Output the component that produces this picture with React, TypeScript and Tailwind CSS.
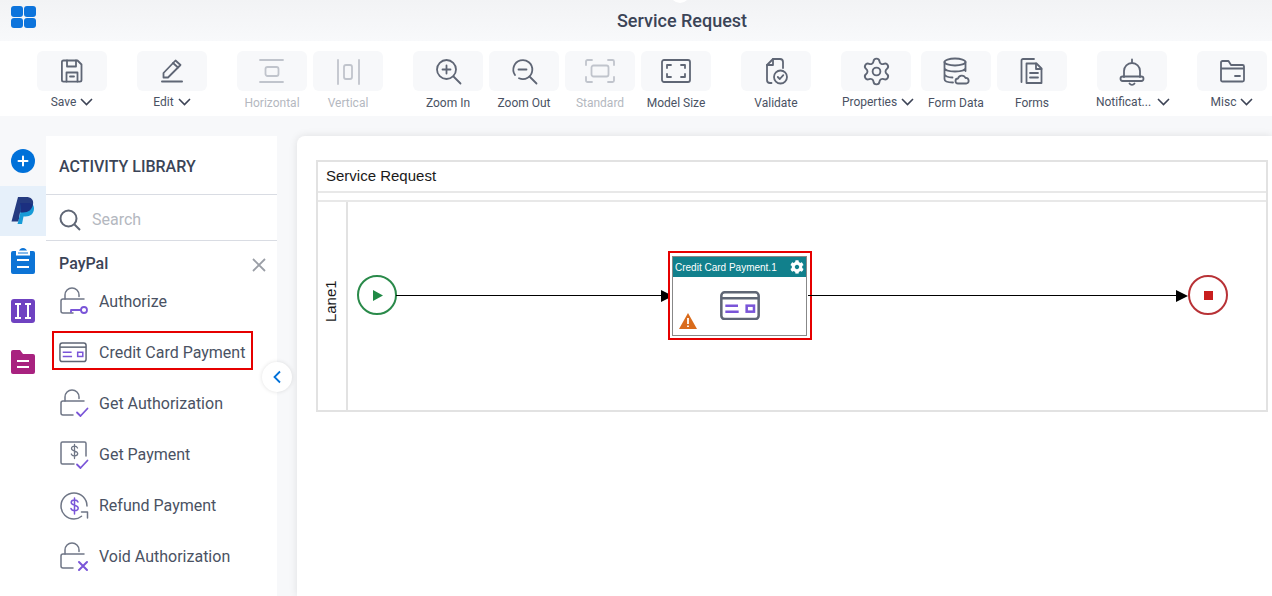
import { ReactNode } from "react";
import { Settings } from "lucide-react";
import { FaCog } from "react-icons/fa";

const stroke = "#5f6675";
const soft = "#6f7686";
const faded = "#c0c4cc";
const violet = "#7a55d8";

function Chevron({ wide }: { wide?: boolean }) {
  return (
    <svg width="13" height="8" viewBox="0 0 13 8" fill="none" className={wide ? "ml-[6px]" : "ml-[4px]"}>
      <path d="M1 1l5.500 5.500L12 1" stroke="#3d4456" strokeWidth="1.600" />
    </svg>
  );
}

function Ico({ children, w = 30, h = 30, vb = "0 0 30 30", color = stroke, sw = 1.8 }: { children: ReactNode; w?: number; h?: number; vb?: string; color?: string; sw?: number }) {
  return (
    <svg width={w} height={h} viewBox={vb} fill="none" stroke={color} strokeWidth={sw} strokeLinecap="round" strokeLinejoin="round">
      {children}
    </svg>
  );
}

type Tool = { label: string; icon: ReactNode; cls: string; menu?: boolean; off?: boolean; wide?: boolean; labelCls?: string };

const tools: Tool[] = [
  {
    label: "Save", menu: true, cls: "",
    icon: <Ico><path d="M6.500 4.500h14l4 4v15.500a1.600 1.600 0 0 1-1.600 1.600H6.500A1.600 1.600 0 0 1 4.900 24V6.100a1.600 1.600 0 0 1 1.600-1.600z" /><path d="M10 4.500v6h9v-6M9.500 25.500v-9h11v9M13 20.500h4" /></Ico>,
  },
  {
    label: "Edit", menu: true, cls: "ml-[30px]",
    icon: <Ico><path d="M6.500 21.500v-4.500L18.500 4.500l5 4.500L11 21.500z" /><path d="M16 7l5 4.500" /><path d="M5 25.500h20" strokeWidth="2" /></Ico>,
  },
  {
    label: "Horizontal", off: true, cls: "ml-[30px]",
    icon: <Ico color={faded}><path d="M3 4h23M3 26h23" /><rect x="8.500" y="11" width="13" height="9" rx="2" /></Ico>,
  },
  {
    label: "Vertical", off: true, cls: "ml-[6px]",
    icon: <Ico color={faded}><path d="M5 4v24M26 4v24" /><rect x="11" y="9" width="8" height="14" rx="2" /></Ico>,
  },
  {
    label: "Zoom In", cls: "ml-[30px]",
    icon: <Ico><circle cx="13.500" cy="13.500" r="9.500" /><path d="M20.500 20.500l7 7M13.500 9.500v8M9.500 13.500h8" /></Ico>,
  },
  {
    label: "Zoom Out", cls: "ml-[6px]",
    icon: <Ico><path d="M6 19a9.500 9.500 0 1 1 4 3.300" /><path d="M20.500 20.500l7 7M9.500 13.500h8" /></Ico>,
  },
  {
    label: "Standard", off: true, cls: "ml-[6px]",
    icon: <Ico color={faded} w={30} h={24} vb="0 0 30 24"><path d="M1 6V2.500A1.500 1.500 0 0 1 2.500 1H7M23 1h4.500A1.500 1.500 0 0 1 29 2.500V6M29 18v3.500a1.500 1.500 0 0 1-1.500 1.500H23M7 23H2.500A1.500 1.500 0 0 1 1 21.500V18" /><rect x="6.500" y="6.500" width="17" height="11" rx="2" /></Ico>,
  },
  {
    label: "Model Size", cls: "ml-[6px]",
    icon: <Ico w={30} h={24} vb="0 0 30 24"><rect x="1" y="1" width="28" height="22" rx="2" /><path d="M6 9V6h4M20 6h4v3M24 15v3h-4M10 18H6v-3" /></Ico>,
  },
  {
    label: "Validate", cls: "ml-[30px]",
    icon: <Ico><path d="M10.500 27H9a3 3 0 0 1-3-3V9l6-6h7a3 3 0 0 1 3 3v6" /><path d="M12 3v6H6" /><circle cx="19.500" cy="21" r="6.500" /><path d="M16.800 21l2 2 3.500-3.800" /></Ico>,
  },
  {
    label: "Properties", menu: true, labelCls: "pl-[4px]", cls: "ml-[30px]",
    icon: <Settings size={31} strokeWidth={1.45} color={stroke} />,
  },
  {
    label: "Form Data", cls: "ml-[10px]",
    icon: <Ico><ellipse cx="14" cy="6" rx="10.500" ry="3.500" /><path d="M3.500 6v17c0 2 3.500 3.500 8.500 3.500M24.500 6v9M3.500 12c0 2 4.500 3.500 10.500 3.500S24.500 14 24.500 12M3.500 18c0 2 3.500 3.500 8 3.500" /><path d="M17 27.500a2.500 2.500 0 0 1 0-5 4 4 0 0 1 7.500-.5 2.800 2.800 0 0 1 1 5.500z" fill="#f7f8fa" /></Ico>,
  },
  {
    label: "Forms", cls: "ml-[6px]",
    icon: <Ico><path d="M4.500 26V4.500A1.500 1.500 0 0 1 6 3h11" /><path d="M9.500 7.500h10l5 5V27h-15z" /><path d="M19 7.500V13h5.500M13 17h8M13 21.500h8" /></Ico>,
  },
  {
    label: "Notificat...", menu: true, wide: true, labelCls: "pl-[2px]", cls: "ml-[30px]",
    icon: <Ico><path d="M15 3.500v2.500M7 21V15a8 8 0 0 1 16 0v6" /><rect x="3.500" y="20.500" width="23" height="4.500" rx="2.200" /><path d="M12.500 27.500a3 3 0 0 0 5 0" /></Ico>,
  },
  {
    label: "Misc", menu: true, cls: "ml-[30px]",
    icon: <Ico><path d="M4 24V6.500A1.500 1.500 0 0 1 5.500 5h6l2.500 4h11.500A1.500 1.500 0 0 1 27 10.500V24a1.500 1.500 0 0 1-1.500 1.500h-20A1.500 1.500 0 0 1 4 24zM4 12.500h23M18 20h5" /></Ico>,
  },
];

function ToolButton({ t }: { t: Tool }) {
  return (
    <div className={`flex w-[70px] shrink-0 flex-col items-center ${t.cls}`}>
      <div className="flex h-10 w-[70px] items-center justify-center rounded-md bg-[#f7f8fa]">{t.icon}</div>
      <div className={`flex h-[22px] items-center whitespace-nowrap text-[12px] ${t.off ? "text-[#b4b8c0]" : "text-[#4a5263]"} ${t.menu ? "" : "pt-[2px]"} ${t.labelCls ?? ""}`}>
        {t.label}
        {t.menu && <Chevron wide={t.wide} />}
      </div>
    </div>
  );
}

function Lock({ children }: { children: ReactNode }) {
  return (
    <Ico color={soft} sw={1.5}>
      <path d="M14 26H4a2 2 0 0 1-2-2V14a2 2 0 0 1 2-2h21" />
      <path d="M6 12V8a7 7 0 0 1 14 0v1.500" />
      {children}
    </Ico>
  );
}

const CardIcon = ({ size = 28, sw = 1.6 }: { size?: number; sw?: number }) => (
  <svg width={size} height={(size * 22) / 30} viewBox="0 0 30 22" fill="none">
    <rect x="1" y="1" width="28" height="20" rx="2.500" stroke={stroke} strokeWidth={sw} />
    <path d="M1 5.500h28" stroke={stroke} strokeWidth={sw} />
    <path d="M4 11h9.500M4 15.500h10" stroke={violet} strokeWidth={sw} />
    <rect x="20" y="11" width="5.500" height="4.500" stroke={violet} strokeWidth={sw} />
  </svg>
);

const activities: { name: string; icon: ReactNode; selected?: boolean }[] = [
  {
    name: "Authorize",
    icon: <Lock><circle cx="25" cy="23" r="3" stroke={violet} strokeWidth="1.800" /><path d="M22 23H12v2" stroke={violet} strokeWidth="1.800" /></Lock>,
  },
  { name: "Credit Card Payment", selected: true, icon: <CardIcon /> },
  {
    name: "Get Authorization",
    icon: <Lock><path d="M18 23.500l3.500 3.500 7-7.500" stroke={violet} strokeWidth="1.800" /></Lock>,
  },
  {
    name: "Get Payment",
    icon: (
      <Ico color={soft} sw={1.5}>
        <path d="M15 24H3.500A1.500 1.500 0 0 1 2 22.500v-19A1.500 1.500 0 0 1 3.500 2h22A1.500 1.500 0 0 1 27 3.500V16" />
        <path d="M18.500 8c-.5-1.200-1.500-1.800-3-1.800-1.700 0-3 .9-3 2.400 0 3.200 6.200 1.800 6.200 5 0 1.500-1.400 2.400-3.200 2.400s-2.800-.7-3.200-2M15.500 4.500v14" strokeWidth="1.300" />
        <path d="M18 24.500l3.500 3.500 7-7.500" stroke={violet} strokeWidth="1.800" />
      </Ico>
    ),
  },
  {
    name: "Refund Payment",
    icon: (
      <Ico color={soft} sw={1.5}>
        <path d="M28 15a13 13 0 1 0-13 13c3 0 5.500-1 7.500-2.700" />
        <path d="M22.500 21h6v6" />
        <path d="M19 11c-.5-1.300-1.700-2-3.500-2-2 0-3.300 1-3.300 2.600 0 3.400 7 1.800 7 5.400 0 1.700-1.600 2.600-3.600 2.600s-3.100-.8-3.600-2.200M15.500 7v16" stroke={violet} strokeWidth="1.500" />
      </Ico>
    ),
  },
  {
    name: "Void Authorization",
    icon: <Lock><path d="M20 20l8 8M28 20l-8 8" stroke={violet} strokeWidth="2" /></Lock>,
  },
];

function Arrow({ className }: { className: string }) {
  return (
    <svg width="12" height="12" viewBox="0 0 12 12" className={`absolute ${className}`}>
      <path d="M0 0l12 6-12 6z" fill="#000" />
    </svg>
  );
}

export default function App() {
  return (
    <div className="relative flex h-[596px] w-[1272px] flex-col overflow-hidden bg-white font-['Roboto',sans-serif]">
      {/* Header */}
      <header className="relative flex h-[41px] shrink-0 items-center justify-center bg-gradient-to-b from-[#f2f3f5] to-[#f8f9fb]">
        <div className="absolute left-[11px] top-[6px] grid grid-cols-2 gap-[1px]">
          <div className="h-[11px] w-[12px] rounded-[3px] bg-[#0d74dc]" />
          <div className="h-[11px] w-[12px] rounded-[3px] bg-[#0d74dc]" />
          <div className="h-[10px] w-[12px] rounded-[3px] bg-[#0d74dc]" />
          <div className="h-[10px] w-[12px] rounded-[3px] bg-[#0d74dc]" />
        </div>
        <div className="absolute left-[670px] top-[-17px] h-5 w-5 rounded-full bg-white" />
        <h1 className="pl-[92px] text-[18px] font-medium text-[#3b4457]">Service Request</h1>
      </header>

      {/* Toolbar */}
      <div className="flex h-[75px] shrink-0 bg-white pl-[37px] pt-[10px]">
        {tools.map((t) => (
          <ToolButton key={t.label} t={t} />
        ))}
      </div>

      {/* Main */}
      <div className="relative flex min-h-0 flex-1 bg-[#f7f8fa]">
        <nav className="flex w-[46px] shrink-0 flex-col items-center pt-[20px]">
          <div className="flex h-[50px] w-full items-center justify-center">
            <div className="flex h-6 w-6 items-center justify-center rounded-full bg-[#0071d9]">
              <svg width="12" height="12" viewBox="0 0 12 12"><path d="M6 1.500v9M1.500 6h9" stroke="#fff" strokeWidth="2" strokeLinecap="round" /></svg>
            </div>
          </div>
          <div className="flex h-[50px] w-full items-center justify-center bg-[#e6f0fa]">
            <svg width="24" height="28" viewBox="0 0 24 28">
              <path d="M7 0h8c5 0 8 2.500 7 7.500-1 5.500-4.500 8-10 8H9l-1.500 9H0.500z" fill="#253b80" />
              <path d="M9 6h7c4 0 7 1 7 5.500 0 5-3.500 8-8.500 8h-2L11 27H6.500l1-3.500L9.500 15z" fill="#179bd7" />
              <path d="M9 6h8.500c2 0 3.600.3 4.500 1.500-1 5-4.500 8-10 8H9.500z" fill="#1b2f80" />
            </svg>
          </div>
          <div className="flex h-[50px] w-full items-center justify-center bg-white">
            <svg width="24" height="26" viewBox="0 0 24 26">
              <path d="M2 3h6c0-1.500 2-3 4-3s4 1.500 4 3h6a2 2 0 0 1 2 2v19a2 2 0 0 1-2 2H2a2 2 0 0 1-2-2V5a2 2 0 0 1 2-2z" fill="#0d74d6" />
              <path d="M6 3.500h12v3H6zM6 12h12M6 19h12" stroke="#fff" strokeWidth="2" fill="none" />
            </svg>
          </div>
          <div className="flex h-[50px] w-full items-center justify-center bg-white">
            <svg width="24" height="24" viewBox="0 0 24 24">
              <rect width="24" height="24" rx="3" fill="#6f42c1" />
              <path d="M4 5h6M7 5v14M4 19h6M14 5h6M17 5v14M14 19h6" stroke="#fff" strokeWidth="2" fill="none" />
            </svg>
          </div>
          <div className="flex h-[50px] w-full flex-1 justify-center bg-white pt-[14px]">
            <svg width="24" height="24" viewBox="0 0 24 24">
              <path d="M0 2a2 2 0 0 1 2-2h7l3 4h10a2 2 0 0 1 2 2v16a2 2 0 0 1-2 2H2a2 2 0 0 1-2-2z" fill="#a8227f" />
              <path d="M6 11h12M6 17h12" stroke="#fff" strokeWidth="2" />
            </svg>
          </div>
        </nav>

        {/* Activity library */}
        <aside className="mt-[20px] w-[231px] shrink-0 bg-white text-[#4a5263]">
          <div className="flex h-[59px] items-center border-b border-[#d9dce3] pl-[13px] pr-3 pt-[3px] text-[16px] font-medium text-[#3b4457]">
            ACTIVITY LIBRARY
          </div>
          <div className="flex h-[46px] items-center gap-[11px] border-b border-[#d9dce3] pl-[13px] pt-[4px]">
            <svg width="22" height="22" viewBox="0 0 22 22" fill="none" stroke={stroke} strokeWidth="2">
              <circle cx="9.500" cy="9.500" r="8" />
              <path d="M15.500 15.500l5.500 5.500" />
            </svg>
            <span className="text-[16px] text-[#b4b8c0]">Search</span>
          </div>
          <div className="flex h-[35px] items-center justify-between pl-[13px] pr-[11px] pt-[11px] text-[16px] font-medium text-[#3b4457]">
            PayPal
            <svg width="14" height="14" viewBox="0 0 14 14" className="mt-[1px]"><path d="M1 1l12 12M13 1L1 13" stroke="#9a9ea6" strokeWidth="1.800" /></svg>
          </div>
          <ul>
            {activities.map((a) => (
              <li key={a.name} className="flex h-[51px] items-center pl-[6px]">
                <div className={`mb-[4px] flex h-[39px] w-[201px] items-center pl-[5px] pt-[4px] ${a.selected ? "border-2 border-[#e60000]" : "border-2 border-transparent"}`}>
                  <div className="flex w-[40px] shrink-0 items-center">{a.icon}</div>
                  <span className="whitespace-nowrap text-[16px] text-[#4a5263]">{a.name}</span>
                </div>
              </li>
            ))}
          </ul>
        </aside>

        <button className="absolute left-[262px] top-[246px] flex h-[30px] w-[30px] items-center justify-center rounded-full bg-white shadow-[0_0_4px_rgba(0,0,0,0.12)]">
          <svg width="10" height="14" viewBox="0 0 10 14" fill="none"><path d="M8 1.500L2.500 7 8 12.500" stroke="#0071d9" strokeWidth="1.800" /></svg>
        </button>

        {/* Canvas */}
        <main className="ml-[20px] mt-[20px] min-w-0 flex-1 rounded-tl-[8px] bg-white pl-[19px] pt-[24px] shadow-[0_0_8px_rgba(0,0,0,0.1)]">
          <div className="h-[252px] w-[952px] border-2 border-[#e2e2e2] font-['Liberation_Sans',sans-serif]">
            <div className="flex h-[29px] items-center pl-[8px] text-[15px] text-[#1a1a1a]">Service Request</div>
            <div className="h-[11px] border-y-2 border-[#e8e8e8]" />
            <div className="relative flex h-[208px]">
              <div className="flex w-[30px] shrink-0 items-center justify-center border-r-2 border-[#e2e2e2] pb-[10px] pr-[3px]">
                <span className="-rotate-90 whitespace-nowrap text-[15px] text-[#1a1a1a]">Lane1</span>
              </div>

              {/* Start event */}
              <div className="absolute left-[39px] top-[73px] flex h-10 w-10 items-center justify-center rounded-full border-2 border-[#2a8a4a] bg-white">
                <svg width="10" height="11" viewBox="0 0 10 11" className="ml-[2px]"><path d="M0 0l10 5.500L0 11z" fill="#1f8a45" /></svg>
              </div>
              <div className="absolute left-[78px] top-[93px] h-px w-[280px] bg-black" />
              <Arrow className="left-[343px] top-[88px]" />

              {/* Activity node */}
              <div className="absolute left-[350px] top-[49px] h-[89px] w-[144px] border-2 border-[#e60000] bg-white pl-[2px] pt-[3px]">
                <div className="h-[80px] w-[135px] border border-[#888]">
                  <div className="flex h-[20px] items-center justify-between bg-[#11808c] pl-[2px] pr-[2px] text-[10px] text-white">
                    <span className="whitespace-nowrap">Credit Card Payment.1</span>
                    <FaCog size={14} color="#fff" />
                  </div>
                  <div className="relative flex h-[58px] items-start justify-center pt-[14px]">
                    <CardIcon size={40} sw={1.9} />
                    <svg width="18" height="16" viewBox="0 0 18 16" className="absolute bottom-[6px] left-[6px]">
                      <path d="M9 0l9 16H0z" fill="#d96b1c" />
                      <path d="M9 5v6M9 12.500v1.500" stroke="#fff" strokeWidth="1.800" />
                    </svg>
                  </div>
                </div>
              </div>
              <div className="absolute left-[490px] top-[93px] h-px w-[370px] bg-black" />
              <Arrow className="left-[858px] top-[88px]" />

              {/* End event */}
              <div className="absolute left-[870px] top-[73px] flex h-10 w-10 items-center justify-center rounded-full border-2 border-[#b83236] bg-white">
                <div className="h-[9px] w-[9px] bg-[#c81e1e]" />
              </div>
            </div>
          </div>
        </main>
      </div>
    </div>
  );
}
